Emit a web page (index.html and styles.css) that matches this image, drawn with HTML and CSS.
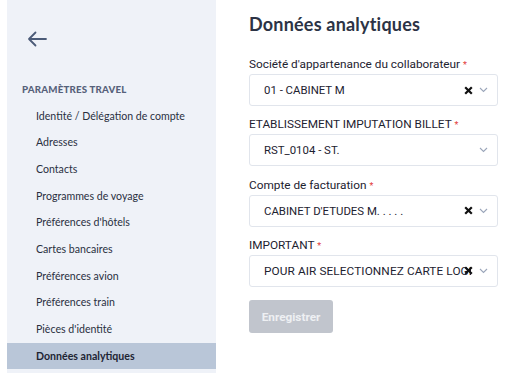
FILE: index.html
```html
<!DOCTYPE html>
<html>
<head>
<meta charset="utf-8">
<title>Données analytiques</title>
<link rel="stylesheet" href="styles.css">
</head>
<body>
<div class="page">
  <div class="sidebar">
    <div class="back">
      <svg width="20" height="16" viewBox="0 0 20 16"><path d="M19 8H2M8.5 1.5L2 8l6.5 6.5" fill="none" stroke="#4b5b78" stroke-width="1.8" stroke-linecap="round" stroke-linejoin="round"/></svg>
    </div>
    <div class="heading">PARAMÈTRES TRAVEL</div>
    <div class="item">Identité / Délégation de compte</div>
    <div class="item">Adresses</div>
    <div class="item">Contacts</div>
    <div class="item">Programmes de voyage</div>
    <div class="item">Préférences d'hôtels</div>
    <div class="item">Cartes bancaires</div>
    <div class="item">Préférences avion</div>
    <div class="item">Préférences train</div>
    <div class="item">Pièces d'identité</div>
    <div class="item active">Données analytiques</div>
  </div>
  <div class="main">
    <h1>Données analytiques</h1>
    <div class="field">
      <label>Société d'appartenance du collaborateur <span class="req">*</span></label>
      <div class="select">
        <span class="value">01 - CABINET M</span>
        <svg class="clear" width="9" height="9" viewBox="0 0 9 9"><path d="M1.2 1.2l6.6 6.6M7.8 1.2L1.2 7.8" stroke="#111" stroke-width="2.2"/></svg>
        <svg class="chev" width="9" height="6" viewBox="0 0 9 6"><path d="M1 1l3.5 3.5L8 1" fill="none" stroke="#9ba6ba" stroke-width="1.1"/></svg>
      </div>
    </div>
    <div class="field">
      <label>ETABLISSEMENT IMPUTATION BILLET <span class="req">*</span></label>
      <div class="select">
        <span class="value">RST_0104 - ST.</span>
        <svg class="chev" width="9" height="6" viewBox="0 0 9 6"><path d="M1 1l3.5 3.5L8 1" fill="none" stroke="#9ba6ba" stroke-width="1.1"/></svg>
      </div>
    </div>
    <div class="field">
      <label>Compte de facturation <span class="req">*</span></label>
      <div class="select">
        <span class="value">CABINET D'ETUDES M. . . . .</span>
        <svg class="clear" width="9" height="9" viewBox="0 0 9 9"><path d="M1.2 1.2l6.6 6.6M7.8 1.2L1.2 7.8" stroke="#111" stroke-width="2.2"/></svg>
        <svg class="chev" width="9" height="6" viewBox="0 0 9 6"><path d="M1 1l3.5 3.5L8 1" fill="none" stroke="#9ba6ba" stroke-width="1.1"/></svg>
      </div>
    </div>
    <div class="field">
      <label>IMPORTANT <span class="req">*</span></label>
      <div class="select">
        <span class="value long">POUR AIR SELECTIONNEZ CARTE LOGE</span>
        <svg class="clear over" width="9" height="9" viewBox="0 0 9 9"><path d="M1.2 1.2l6.6 6.6M7.8 1.2L1.2 7.8" stroke="#111" stroke-width="2.2"/></svg>
        <svg class="chev" width="9" height="6" viewBox="0 0 9 6"><path d="M1 1l3.5 3.5L8 1" fill="none" stroke="#9ba6ba" stroke-width="1.1"/></svg>
      </div>
    </div>
    <button class="save">Enregistrer</button>
  </div>
</div>
</body>
</html>
```
FILE: styles.css
```css
body{margin:0;background:#fff;font-family:"Lato","Liberation Sans",sans-serif;}
.page{display:flex;height:373px;padding-left:7px;overflow:hidden;}
.sidebar{width:209px;flex:none;background:#eff2f8;}
.back{padding:31px 0 0 20px;box-sizing:border-box;height:60px;}
.back svg{display:block;}
.heading{margin-top:23px;padding-left:15px;font-size:9.7px;font-weight:900;color:#56617a;letter-spacing:0.2px;height:19.7px;}
.item{height:26.67px;line-height:26.67px;padding-left:29px;font-size:10.6px;color:#2a303f;}
.item.active{background:#b9c6d8;font-weight:700;color:#1e2433;}
.main{flex:1;min-width:0;padding-left:33px;padding-right:7px;font-family:"Roboto","Liberation Sans",sans-serif;}
h1{margin:11px 0 0;font-family:"Lato","Liberation Sans",sans-serif;font-size:18px;font-weight:700;color:#2c3345;letter-spacing:0.2px;height:29px;line-height:26px;}
.field{height:60.3px;}
.field:first-of-type{margin-top:16px;}
label{display:block;font-size:11.8px;color:#1d2230;height:16px;line-height:16px;margin-bottom:2px;}
.req{color:#e23b3b;font-size:9px;}
.select{display:flex;align-items:center;height:32px;box-sizing:border-box;border:1px solid #e1e5ec;border-radius:3px;padding:0 9px 0 14px;font-size:11.4px;color:#1d2230;}
.value{flex:1;min-width:0;white-space:nowrap;overflow:hidden;}
.value.long{font-size:11.8px;letter-spacing:0.1px;}
.clear{display:block;flex:none;margin-right:6px;}
.clear.over{margin-left:-7px;}
.chev{display:block;flex:none;}
.save{margin-top:3px;width:84px;height:33px;border:none;border-radius:3px;background:#c1c5cd;color:#eef0f3;font-family:"Roboto","Liberation Sans",sans-serif;font-size:11.8px;font-weight:700;}
```
